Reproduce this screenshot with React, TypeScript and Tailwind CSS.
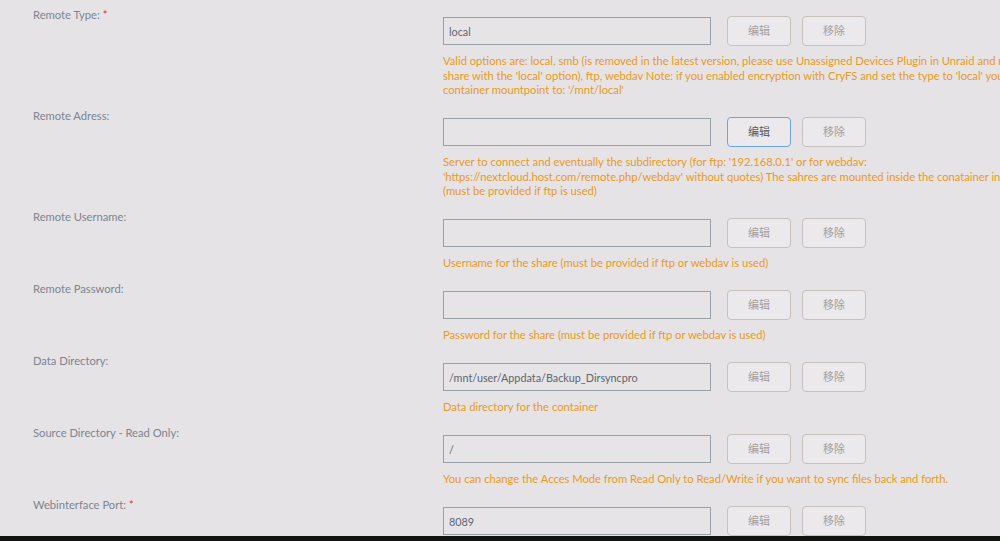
const fields = [
  {
    label: "Remote Type:",
    required: true,
    value: "local",
    help: [
      "Valid options are: local, smb (is removed in the latest version, please use Unassigned Devices Plugin in Unraid and mount the",
      "share with the 'local' option), ftp, webdav Note: if you enabled encryption with CryFS and set the type to 'local' you must set the",
      "container mountpoint to: '/mnt/local'",
    ],
  },
  {
    label: "Remote Adress:",
    value: "",
    active: true,
    help: [
      "Server to connect and eventually the subdirectory (for ftp: '192.168.0.1' or for webdav:",
      "'https://nextcloud.host.com/remote.php/webdav' without quotes) The sahres are mounted inside the conatainer in /mnt/remote",
      "(must be provided if ftp is used)",
    ],
  },
  {
    label: "Remote Username:",
    value: "",
    help: ["Username for the share (must be provided if ftp or webdav is used)"],
  },
  {
    label: "Remote Password:",
    value: "",
    help: ["Password for the share (must be provided if ftp or webdav is used)"],
  },
  {
    label: "Data Directory:",
    value: "/mnt/user/Appdata/Backup_Dirsyncpro",
    help: ["Data directory for the container"],
  },
  {
    label: "Source Directory - Read Only:",
    value: "/",
    help: ["You can change the Acces Mode from Read Only to Read/Write if you want to sync files back and forth."],
  },
  {
    label: "Webinterface Port:",
    required: true,
    value: "8089",
    help: ["Web interface port"],
  },
];

type Field = (typeof fields)[number] & { required?: boolean; active?: boolean };

const FieldRow = ({ field }: { field: Field }) => (
  <div className="flex items-start mb-[11.5px]">
    <div className="w-[443px] shrink-0 pl-[33px] text-[11.2px] leading-[14px] text-[#7c8592]">
      {field.label}
      {field.required && <span className="ml-[3px] text-[#e0302a]">*</span>}
    </div>
    <div className="flex flex-col pt-2">
      <div className="flex items-center h-[30px]">
        <input
          readOnly
          value={field.value}
          className="w-[268px] h-[28px] px-[5px] bg-[#e6e4e6] border border-[#98a0a8] text-[10.8px] text-[#5f6570] outline-none"
        />
        <button
          className={`ml-[16px] w-[64px] h-[30px] rounded-[4px] border bg-[#ebe9eb] text-[11px] ${
            field.active ? "border-[#6aa6dc] text-[#555a60]" : "border-[#c9c1bb] text-[#a39e9e]"
          }`}
        >
          编辑
        </button>
        <button className="ml-[11px] w-[64px] h-[30px] rounded-[4px] border border-[#c9c1bb] bg-[#ebe9eb] text-[11px] text-[#a39e9e]">
          移除
        </button>
      </div>
      <div className="mt-2 text-[11.2px] leading-[14.5px] text-[#ea9a22]">
        {field.help.map((line, i) => (
          <div key={i} className="whitespace-nowrap">
            {line}
          </div>
        ))}
      </div>
    </div>
  </div>
);

export default function App() {
  return (
    <div
      className="w-[1000px] h-[541px] overflow-hidden bg-[#e5e3e5] flex flex-col"
      style={{ fontFamily: "Lato, 'Noto Sans CJK SC', sans-serif" }}
    >
      <main className="h-[536px] overflow-hidden pt-2">
        {fields.map((f) => (
          <FieldRow key={f.label} field={f} />
        ))}
      </main>
      <footer className="h-[5px] bg-[#121412]" />
    </div>
  );
}
